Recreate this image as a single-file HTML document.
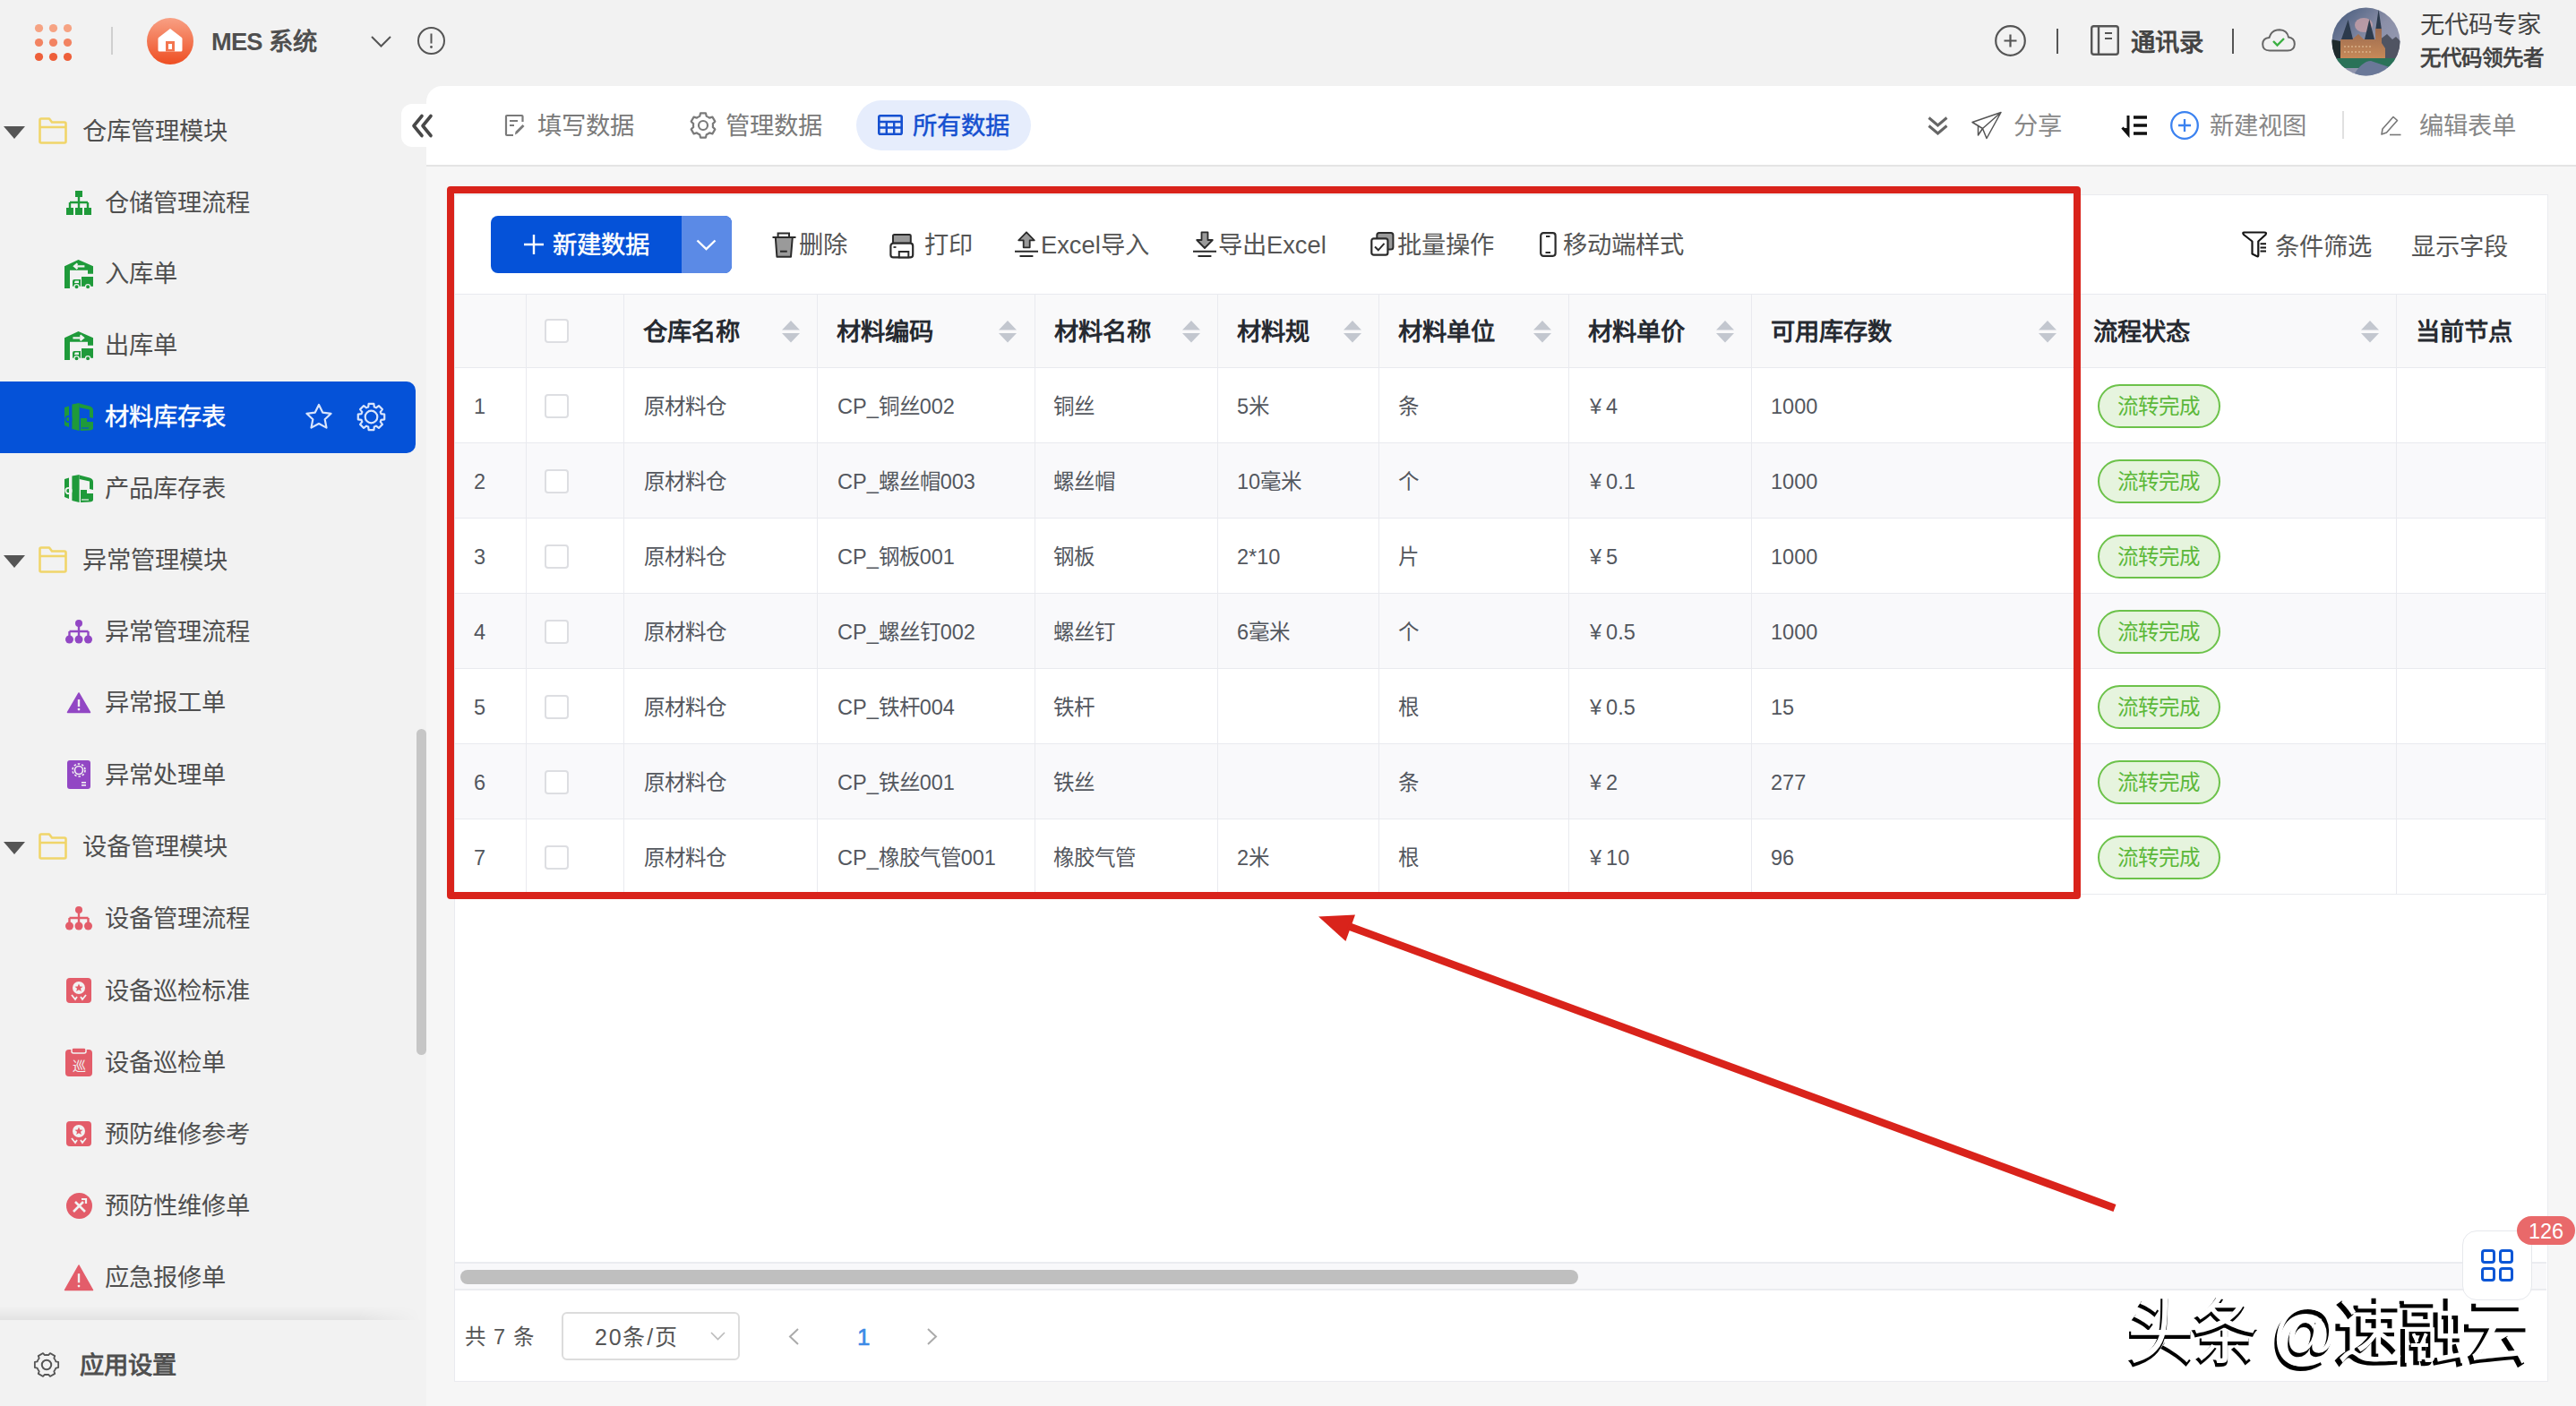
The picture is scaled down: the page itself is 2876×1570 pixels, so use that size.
<!DOCTYPE html>
<html lang="zh-CN"><head><meta charset="utf-8"><title>MES</title><style>
*{margin:0;padding:0;box-sizing:border-box}
html,body{width:2876px;height:1570px;overflow:hidden;background:#f2f2f2;font-family:"Liberation Sans",sans-serif}
.t{position:absolute;white-space:nowrap}
.s{position:absolute;overflow:visible}
.r{position:absolute}
</style></head>
<body>
<svg class="s" style="left:39px;top:27px;" width="42" height="42" viewBox="0 0 42 42"><circle cx="4.5" cy="4.5" r="4.6" fill="#f6a383"/><circle cx="20.5" cy="4.5" r="4.6" fill="#f6a383"/><circle cx="36.5" cy="4.5" r="4.6" fill="#f6a383"/><circle cx="4.5" cy="20.5" r="4.6" fill="#f28362"/><circle cx="20.5" cy="20.5" r="4.6" fill="#f28362"/><circle cx="36.5" cy="20.5" r="4.6" fill="#f28362"/><circle cx="4.5" cy="36.5" r="4.6" fill="#ee5f3a"/><circle cx="20.5" cy="36.5" r="4.6" fill="#ee5f3a"/><circle cx="36.5" cy="36.5" r="4.6" fill="#ee5f3a"/></svg>
<div class="r" style="left:124px;top:30px;width:2px;height:31px;background:#cfcfcf"></div>
<svg class="s" style="left:164px;top:20px;" width="52" height="52" viewBox="0 0 52 52"><defs><linearGradient id="og" x1="0" y1="0" x2="0" y2="1"><stop offset="0" stop-color="#f8a084"/><stop offset="1" stop-color="#ee4e22"/></linearGradient></defs>
<circle cx="26" cy="26" r="26" fill="url(#og)"/>
<path d="M26 12 L39 22 Q39.5 22.5 39.5 23.5 L39.5 36 Q39.5 37.5 38 37.5 L14 37.5 Q12.5 37.5 12.5 36 L12.5 23.5 Q12.5 22.5 13 22 Z" fill="#fff"/><rect x="21" y="26" width="10" height="11.5" fill="#f3764f"/><rect x="24" y="29" width="4" height="6" fill="#fff"/></svg>
<div class="t" style="left:236px;top:28.0px;font-size:27.3px;line-height:38px;color:#4f4f4f;font-weight:bold;letter-spacing:-0.8px">MES<span style="letter-spacing:0"> </span>系统</div>
<svg class="s" style="left:414px;top:40px;" width="23" height="13" viewBox="0 0 23 13"><path d="M1 1 L11.5 11.5 L22 1" fill="none" stroke="#555" stroke-width="2"/></svg>
<svg class="s" style="left:466px;top:30px;" width="31" height="31" viewBox="0 0 31 31"><circle cx="15.5" cy="15.5" r="14.5" fill="none" stroke="#555" stroke-width="2"/><rect x="14.5" y="7.5" width="2" height="11" fill="#555"/><circle cx="15.5" cy="22.5" r="1.4" fill="#555"/></svg>
<svg class="s" style="left:2227px;top:28px;" width="35" height="35" viewBox="0 0 35 35"><circle cx="17.5" cy="17.5" r="16.3" fill="none" stroke="#555" stroke-width="2.2"/><path d="M17.5 10.5V24.5M10.5 17.5H24.5" stroke="#555" stroke-width="2.2"/></svg>
<div class="r" style="left:2296px;top:32px;width:2px;height:28px;background:#555"></div>
<svg class="s" style="left:2334px;top:28px;" width="32" height="34" viewBox="0 0 32 34"><rect x="1.2" y="1.2" width="29.6" height="31.6" rx="2.5" fill="none" stroke="#555" stroke-width="2.4"/><path d="M9 1.5V32.5" stroke="#555" stroke-width="2.4"/><path d="M16 9H24M16 15H24" stroke="#555" stroke-width="2"/></svg>
<div class="t" style="left:2379px;top:29.0px;font-size:27.3px;line-height:38px;color:#444;font-weight:bold;">通讯录</div>
<div class="r" style="left:2492px;top:32px;width:2px;height:28px;background:#555"></div>
<svg class="s" style="left:2525px;top:32px;" width="38" height="26" viewBox="0 0 38 26"><path d="M9 24.5 Q1 24.5 1.2 17 Q1.5 10.5 8.5 10 Q11 1.2 20 1.2 Q28.5 1.5 30 9.5 Q37 10.5 36.8 17.5 Q36.5 24.5 29 24.5 Z" fill="none" stroke="#666" stroke-width="2"/><path d="M13 14 L17.5 18.5 L25 11" fill="none" stroke="#3cb043" stroke-width="2.4"/></svg>
<svg class="s" style="left:2603px;top:8px;" width="77" height="77" viewBox="0 0 77 77"><defs><clipPath id="av"><circle cx="38.5" cy="38.5" r="38"/></clipPath>
<linearGradient id="sky" x1="0" y1="0" x2="1" y2="1"><stop offset="0" stop-color="#3f5578"/><stop offset="0.5" stop-color="#8c90a8"/><stop offset="1" stop-color="#9aa0b8"/></linearGradient>
<linearGradient id="fac" x1="0" y1="0" x2="0" y2="1"><stop offset="0" stop-color="#9a6a50"/><stop offset="1" stop-color="#c88a58"/></linearGradient></defs>
<g clip-path="url(#av)"><rect width="77" height="77" fill="url(#sky)"/>
<ellipse cx="36" cy="20" rx="10" ry="8" fill="#c8a0a8" opacity="0.8"/>
<path d="M53 37 L62 30 L68 36 L72 33 L77 38 L77 57 L53 57 Z" fill="#505462"/>
<path d="M0 36 L10 38 L10 58 L0 58 Z" fill="#1f2b2c"/>
<path d="M10 58 L10 36 L23 36 L30 30 L36 36 L49 36 L49 24 L56 24 L56 40 L60 46 L60 58 Z" fill="url(#fac)"/>
<path d="M11 36 L18.6 14 L24 36 Z M37 36 L42.3 13.5 L48 36 Z M49.4 24 L52.6 2.5 L55.8 24 Z" fill="#2c3a4c"/>
<path d="M14 44 H45 M14 50 H45" stroke="#e8c8a0" stroke-width="1.2" stroke-dasharray="2 2"/>
<path d="M0 57 L77 57 L77 68 L0 68 Z" fill="#2a7258"/>
<path d="M24 77 Q34 60 44 60 Q60 66 77 70 L77 77 Z" fill="#6a7898"/>
<path d="M0 68 Q20 70 30 77 L0 77 Z" fill="#5a6888"/></g></svg>
<div class="t" style="left:2702px;top:9.0px;font-size:27.3px;line-height:38px;color:#444;font-weight:normal;">无代码专家</div>
<div class="t" style="left:2702px;top:49.0px;font-size:23.5px;line-height:32px;color:#444;font-weight:bold;">无代码领先者</div>
<div class="r" style="left:476px;top:96px;width:2400px;height:1474px;background:#f6f6f6;border-top-left-radius:18px"></div>
<div class="r" style="left:476px;top:96px;width:2400px;height:90px;background:#fff;border-top-left-radius:18px;border-bottom:2px solid #e4e4e4"></div>
<div class="r" style="left:448px;top:116px;width:40px;height:48px;background:#fff;border-radius:12px 0 0 12px"></div>
<svg class="s" style="left:460px;top:128px;" width="24" height="25" viewBox="0 0 24 25"><path d="M11 1.5 L2 12.5 L11 23.5 M21 1.5 L12 12.5 L21 23.5" fill="none" stroke="#484848" stroke-width="3.6" stroke-linejoin="round" stroke-linecap="round"/></svg>
<svg class="s" style="left:564px;top:128px;" width="21" height="24" viewBox="0 0 21 24"><path d="M19.5 8 V2 Q19.5 1 18.5 1 L2 1 Q1 1 1 2 L1 22 Q1 23 2 23 L9 23" fill="none" stroke="#7a7a7a" stroke-width="2.2"/><path d="M5 7 H14 M5 12 H10" stroke="#7a7a7a" stroke-width="2"/><path d="M11 22.5 L11.5 19 L19.5 11 L21.5 13 L13.5 21 Z" fill="#7a7a7a"/></svg>
<div class="t" style="left:600px;top:122.0px;font-size:27.3px;line-height:38px;color:#7a7a7a;font-weight:normal;">填写数据</div>
<svg class="s" style="left:770px;top:125px;" width="30" height="30" viewBox="0 0 30 30"><path d="M11.24 4.66 L12.09 1.31 L17.91 1.31 L18.76 4.66 A11 11 0 0 1 22.07 6.57 L25.40 5.63 L28.31 10.67 L25.83 13.09 A11 11 0 0 1 25.83 16.91 L28.31 19.33 L25.40 24.37 L22.07 23.43 A11 11 0 0 1 18.76 25.34 L17.91 28.69 L12.09 28.69 L11.24 25.34 A11 11 0 0 1 7.93 23.43 L4.60 24.37 L1.69 19.33 L4.17 16.91 A11 11 0 0 1 4.17 13.09 L1.69 10.67 L4.60 5.63 L7.93 6.57 A11 11 0 0 1 11.24 4.66 Z" fill="none" stroke="#7a7a7a" stroke-width="2.2" stroke-linejoin="round"/><circle cx="15" cy="15" r="5" fill="none" stroke="#7a7a7a" stroke-width="2.2"/></svg>
<div class="t" style="left:810px;top:122.0px;font-size:27.3px;line-height:38px;color:#7a7a7a;font-weight:normal;">管理数据</div>
<div class="r" style="left:956px;top:112px;width:195px;height:56px;background:#e6edfc;border-radius:28px"></div>
<svg class="s" style="left:980px;top:128px;" width="28" height="23" viewBox="0 0 28 23"><rect x="1.3" y="1.3" width="25.4" height="20.4" rx="1.5" fill="none" stroke="#1550d0" stroke-width="2.6"/><path d="M1.3 8 H26.7 M1.3 14.5 H26.7 M9.8 8 V21.7 M18.2 8 V21.7" stroke="#1550d0" stroke-width="2.4"/></svg>
<div class="t" style="left:1019px;top:122.0px;font-size:27.3px;line-height:38px;color:#1550d0;font-weight:normal;-webkit-text-stroke:0.5px #1550d0">所有数据</div>
<svg class="s" style="left:2152px;top:130px;" width="23" height="21" viewBox="0 0 23 21"><path d="M1.5 1.5 L11.5 10 L21.5 1.5 M1.5 10.5 L11.5 19 L21.5 10.5" fill="none" stroke="#666" stroke-width="3"/></svg>
<svg class="s" style="left:2201px;top:125px;" width="34" height="30" viewBox="0 0 34 30"><path d="M1 11.5 L33 0.5 L17 29.5 L12.5 18.5 Z M12.5 18.5 L33 0.5 M7.5 14.5 L7.5 26 L12.5 18.5" fill="none" stroke="#555" stroke-width="1.5" stroke-linejoin="round"/></svg>
<div class="t" style="left:2248px;top:122.0px;font-size:27.3px;line-height:38px;color:#888;font-weight:normal;">分享</div>
<svg class="s" style="left:2368px;top:129px;" width="30" height="22" viewBox="0 0 30 22"><path d="M8 0 V19 M1.5 13.5 L8 21 L8 13" stroke="#111" stroke-width="3" fill="none"/><path d="M1 14 L8 22 L8 14 Z" fill="#111"/><path d="M14 2 H29 M14 11 H29 M14 20 H29" stroke="#111" stroke-width="3.4"/></svg>
<svg class="s" style="left:2423px;top:124px;" width="32" height="32" viewBox="0 0 32 32"><circle cx="16" cy="16" r="14.8" fill="none" stroke="#3b82f0" stroke-width="2.3"/><path d="M16 9 V23 M9 16 H23" stroke="#3b82f0" stroke-width="2.3"/></svg>
<div class="t" style="left:2467px;top:122.0px;font-size:27.3px;line-height:38px;color:#888;font-weight:normal;">新建视图</div>
<div class="r" style="left:2615px;top:124px;width:2px;height:31px;background:#e0e0e0"></div>
<svg class="s" style="left:2657px;top:128px;" width="24" height="24" viewBox="0 0 24 24"><path d="M2 22 L3 16 L15 2.5 L19.5 6.5 L7.5 20 Z" fill="none" stroke="#777" stroke-width="1.6" stroke-linejoin="round"/><path d="M11 22.5 H23.5" stroke="#777" stroke-width="1.6"/></svg>
<div class="t" style="left:2701px;top:122.0px;font-size:27.3px;line-height:38px;color:#888;font-weight:normal;">编辑表单</div>
<svg class="s" style="left:4px;top:141px;" width="24" height="14" viewBox="0 0 24 14"><path d="M0 0 L24 0 L12 14 Z" fill="#555"/></svg>
<svg class="s" style="left:43px;top:131px;" width="32" height="30" viewBox="0 0 32 30"><path d="M1.5 3 Q1.5 1.5 3 1.5 L12 1.5 L15 5.5 L29 5.5 Q30.5 5.5 30.5 7 L30.5 27 Q30.5 28.5 29 28.5 L3 28.5 Q1.5 28.5 1.5 27 Z M1.5 11 L30.5 11" fill="none" stroke="#f0d56a" stroke-width="2.6" stroke-linejoin="round"/></svg>
<div class="t" style="left:92px;top:128.0px;font-size:27.3px;line-height:38px;color:#4f4f4f;font-weight:normal;">仓库管理模块</div>
<svg class="s" style="left:74px;top:212.5px;" width="28" height="27" viewBox="0 0 28 27"><rect x="10" y="0" width="8" height="7" fill="#1f9a3a"/><path d="M14 7V13M4 13H24M4 13V19M14 13V19M24 13V19" stroke="#1f9a3a" stroke-width="2.4" fill="none"/><rect x="0" y="19" width="8" height="8" fill="#1f9a3a"/><rect x="10" y="19" width="8" height="8" fill="#1f9a3a"/><rect x="20" y="19" width="8" height="8" fill="#1f9a3a"/></svg>
<div class="t" style="left:117px;top:208.0px;font-size:27.3px;line-height:38px;color:#4f4f4f;font-weight:normal;">仓储管理流程</div>
<svg class="s" style="left:72px;top:289.5px;" width="32" height="33" viewBox="0 0 32 33"><path d="M0 7.3 L15.5 0 L32 7.3 V15.8 H26 V11.8 H6 V32 H0 Z" fill="#1f9a3a"/><path d="M22.4 7.3 H11.5 M14.5 4.4 L11 7.3 L14.5 10.2" stroke="#f2f2f2" stroke-width="2.2" fill="none"/><rect x="19" y="19" width="13" height="10.8" fill="#1f9a3a"/><path d="M9 29.8 V24 Q9 22 11 22 L18 22 L18 29.8 Z" fill="#1f9a3a"/><path d="M11 26 L11.8 23.6 H16 V26 Z" fill="#f2f2f2"/><circle cx="13.5" cy="30.2" r="2.6" fill="#1f9a3a" stroke="#f2f2f2" stroke-width="1.2"/><circle cx="26.1" cy="30.2" r="2.6" fill="#1f9a3a" stroke="#f2f2f2" stroke-width="1.2"/></svg>
<div class="t" style="left:117px;top:287.0px;font-size:27.3px;line-height:38px;color:#4f4f4f;font-weight:normal;">入库单</div>
<svg class="s" style="left:72px;top:369.5px;" width="32" height="33" viewBox="0 0 32 33"><path d="M0 7.3 L15.5 0 L32 7.3 V15.8 H26 V11.8 H6 V32 H0 Z" fill="#1f9a3a"/><path d="M9.4 7.3 H20.5 M17.5 4.4 L21 7.3 L17.5 10.2" stroke="#f2f2f2" stroke-width="2.2" fill="none"/><rect x="19" y="19" width="13" height="10.8" fill="#1f9a3a"/><path d="M9 29.8 V24 Q9 22 11 22 L18 22 L18 29.8 Z" fill="#1f9a3a"/><path d="M11 26 L11.8 23.6 H16 V26 Z" fill="#f2f2f2"/><circle cx="13.5" cy="30.2" r="2.6" fill="#1f9a3a" stroke="#f2f2f2" stroke-width="1.2"/><circle cx="26.1" cy="30.2" r="2.6" fill="#1f9a3a" stroke="#f2f2f2" stroke-width="1.2"/></svg>
<div class="t" style="left:117px;top:367.0px;font-size:27.3px;line-height:38px;color:#4f4f4f;font-weight:normal;">出库单</div>
<div class="r" style="left:-20px;top:426px;width:484px;height:80px;background:#0552d8;border-radius:10px"></div>
<svg class="s" style="left:72px;top:449.5px;" width="32" height="32" viewBox="0 0 32 32"><path d="M0 5 L5 3.5 V27 L0 25 Z" fill="#1f9a3a"/><path d="M8.4 1.5 L16.6 0 V31 L8.4 29 Z" fill="#1f9a3a"/><path d="M16.6 0.5 L28 3.5 Q32 4.5 32 8 V17 L28 16 V7.5 L16.6 5 Z" fill="#1f9a3a"/><path d="M18 17 H25 V21 H32 V28 Q32 30 28 30.5 L18 31 Z" fill="#1f9a3a"/><circle cx="4.5" cy="18" r="3.2" fill="none" stroke="#0552d8" stroke-width="1.8"/><path d="M19 28 H27" stroke="#0552d8" stroke-width="1.2"/></svg>
<div class="t" style="left:117px;top:447.0px;font-size:27.3px;line-height:38px;color:#fff;font-weight:normal;-webkit-text-stroke:0.5px #fff">材料库存表</div>
<svg class="s" style="left:340px;top:450px;" width="32" height="31" viewBox="0 0 32 31"><path d="M16 2 L20.2 10.6 L29.6 11.8 L22.7 18.3 L24.5 27.6 L16 23 L7.5 27.6 L9.3 18.3 L2.4 11.8 L11.8 10.6 Z" fill="none" stroke="#d8e4fc" stroke-width="2.2" stroke-linejoin="round"/></svg>
<svg class="s" style="left:398px;top:449px;" width="33" height="33" viewBox="0 0 33 33"><path d="M13.14 5.50 L13.64 1.78 L19.36 1.78 L19.86 5.50 A11.5 11.5 0 0 1 21.90 6.35 L24.89 4.06 L28.94 8.11 L26.65 11.10 A11.5 11.5 0 0 1 27.50 13.14 L31.22 13.64 L31.22 19.36 L27.50 19.86 A11.5 11.5 0 0 1 26.65 21.90 L28.94 24.89 L24.89 28.94 L21.90 26.65 A11.5 11.5 0 0 1 19.86 27.50 L19.36 31.22 L13.64 31.22 L13.14 27.50 A11.5 11.5 0 0 1 11.10 26.65 L8.11 28.94 L4.06 24.89 L6.35 21.90 A11.5 11.5 0 0 1 5.50 19.86 L1.78 19.36 L1.78 13.64 L5.50 13.14 A11.5 11.5 0 0 1 6.35 11.10 L4.06 8.11 L8.11 4.06 L11.10 6.35 A11.5 11.5 0 0 1 13.14 5.50 Z" fill="none" stroke="#d8e4fc" stroke-width="2.2" stroke-linejoin="round"/><circle cx="16.5" cy="16.5" r="6.8" fill="none" stroke="#d8e4fc" stroke-width="2.2"/></svg>
<svg class="s" style="left:72px;top:529.5px;" width="32" height="32" viewBox="0 0 32 32"><path d="M0 5 L5 3.5 V27 L0 25 Z" fill="#1f9a3a"/><path d="M8.4 1.5 L16.6 0 V31 L8.4 29 Z" fill="#1f9a3a"/><path d="M16.6 0.5 L28 3.5 Q32 4.5 32 8 V17 L28 16 V7.5 L16.6 5 Z" fill="#1f9a3a"/><path d="M18 17 H25 V21 H32 V28 Q32 30 28 30.5 L18 31 Z" fill="#1f9a3a"/><circle cx="4.5" cy="18" r="3.2" fill="none" stroke="#f2f2f2" stroke-width="1.8"/><path d="M19 28 H27" stroke="#f2f2f2" stroke-width="1.2"/></svg>
<div class="t" style="left:117px;top:527.0px;font-size:27.3px;line-height:38px;color:#4f4f4f;font-weight:normal;">产品库存表</div>
<svg class="s" style="left:4px;top:620px;" width="24" height="14" viewBox="0 0 24 14"><path d="M0 0 L24 0 L12 14 Z" fill="#555"/></svg>
<svg class="s" style="left:43px;top:610px;" width="32" height="30" viewBox="0 0 32 30"><path d="M1.5 3 Q1.5 1.5 3 1.5 L12 1.5 L15 5.5 L29 5.5 Q30.5 5.5 30.5 7 L30.5 27 Q30.5 28.5 29 28.5 L3 28.5 Q1.5 28.5 1.5 27 Z M1.5 11 L30.5 11" fill="none" stroke="#f0d56a" stroke-width="2.6" stroke-linejoin="round"/></svg>
<div class="t" style="left:92px;top:607.0px;font-size:27.3px;line-height:38px;color:#4f4f4f;font-weight:normal;">异常管理模块</div>
<svg class="s" style="left:73px;top:692px;" width="30" height="27" viewBox="0 0 30 27"><circle cx="15" cy="4" r="4" fill="#9247c4"/><path d="M15 7V13M4.5 13H25.5M4.5 13V21M15 13V21M25.5 13V21" stroke="#9247c4" stroke-width="2.4" fill="none"/><circle cx="4.5" cy="22" r="4.5" fill="#9247c4"/><circle cx="15" cy="22" r="4.5" fill="#9247c4"/><circle cx="25.5" cy="22" r="4.5" fill="#9247c4"/></svg>
<div class="t" style="left:117px;top:687.0px;font-size:27.3px;line-height:38px;color:#4f4f4f;font-weight:normal;">异常管理流程</div>
<svg class="s" style="left:75px;top:772.5px;" width="26" height="23" viewBox="0 0 26 23"><path d="M13.0 1 L25.5 22.5 L0.5 22.5 Z" fill="#9247c4" stroke="#9247c4" stroke-linejoin="round" stroke-width="1.5"/><rect x="11.8" y="8.049999999999999" width="2.4" height="8.049999999999999" fill="#f2f2f2"/><circle cx="13.0" cy="19.09" r="1.4" fill="#f2f2f2"/></svg>
<div class="t" style="left:117px;top:766.0px;font-size:27.3px;line-height:38px;color:#4f4f4f;font-weight:normal;">异常报工单</div>
<svg class="s" style="left:75px;top:849px;" width="26" height="32" viewBox="0 0 26 32"><rect x="0" y="0" width="26" height="32" rx="3" fill="#9247c4"/><circle cx="13" cy="11" r="4.5" fill="none" stroke="#f2f2f2" stroke-width="1.6"/><circle cx="13" cy="11" r="7" fill="none" stroke="#f2f2f2" stroke-width="1.6" stroke-dasharray="2.5 2"/><rect x="16" y="24" width="5" height="1.6" fill="#f2f2f2"/><rect x="16" y="27" width="5" height="1.6" fill="#f2f2f2"/></svg>
<div class="t" style="left:117px;top:847.0px;font-size:27.3px;line-height:38px;color:#4f4f4f;font-weight:normal;">异常处理单</div>
<svg class="s" style="left:4px;top:940px;" width="24" height="14" viewBox="0 0 24 14"><path d="M0 0 L24 0 L12 14 Z" fill="#555"/></svg>
<svg class="s" style="left:43px;top:930px;" width="32" height="30" viewBox="0 0 32 30"><path d="M1.5 3 Q1.5 1.5 3 1.5 L12 1.5 L15 5.5 L29 5.5 Q30.5 5.5 30.5 7 L30.5 27 Q30.5 28.5 29 28.5 L3 28.5 Q1.5 28.5 1.5 27 Z M1.5 11 L30.5 11" fill="none" stroke="#f0d56a" stroke-width="2.6" stroke-linejoin="round"/></svg>
<div class="t" style="left:92px;top:927.0px;font-size:27.3px;line-height:38px;color:#4f4f4f;font-weight:normal;">设备管理模块</div>
<svg class="s" style="left:73px;top:1012px;" width="30" height="27" viewBox="0 0 30 27"><circle cx="15" cy="4" r="4" fill="#e35d6a"/><path d="M15 7V13M4.5 13H25.5M4.5 13V21M15 13V21M25.5 13V21" stroke="#e35d6a" stroke-width="2.4" fill="none"/><circle cx="4.5" cy="22" r="4.5" fill="#e35d6a"/><circle cx="15" cy="22" r="4.5" fill="#e35d6a"/><circle cx="25.5" cy="22" r="4.5" fill="#e35d6a"/></svg>
<div class="t" style="left:117px;top:1007.0px;font-size:27.3px;line-height:38px;color:#4f4f4f;font-weight:normal;">设备管理流程</div>
<svg class="s" style="left:74px;top:1092px;" width="28" height="28" viewBox="0 0 28 28"><rect x="0" y="0" width="28" height="28" rx="4" fill="#e35d6a"/><circle cx="14" cy="11" r="7" fill="#f2f2f2"/><path d="M14 6.5 L15.3 9.5 L18.5 9.7 L16 11.8 L16.8 15 L14 13.3 L11.2 15 L12 11.8 L9.5 9.7 L12.7 9.5 Z" fill="#e35d6a"/><path d="M6 19 L10 24 L12 21 M22 19 L18 24 L16 21" stroke="#f2f2f2" stroke-width="1.8" fill="none"/></svg>
<div class="t" style="left:117px;top:1088.0px;font-size:27.3px;line-height:38px;color:#4f4f4f;font-weight:normal;">设备巡检标准</div>
<svg class="s" style="left:73px;top:1170px;" width="30" height="32" viewBox="0 0 30 32"><rect x="0" y="2" width="30" height="30" rx="4" fill="#e35d6a"/><rect x="7" y="0" width="16" height="6" rx="2" fill="#e35d6a" stroke="#f2f2f2" stroke-width="1.5"/><text x="15" y="26" font-size="15" fill="#f2f2f2" text-anchor="middle">巡</text></svg>
<div class="t" style="left:117px;top:1168.0px;font-size:27.3px;line-height:38px;color:#4f4f4f;font-weight:normal;">设备巡检单</div>
<svg class="s" style="left:74px;top:1252px;" width="28" height="28" viewBox="0 0 28 28"><rect x="0" y="0" width="28" height="28" rx="4" fill="#e35d6a"/><circle cx="14" cy="11" r="7" fill="#f2f2f2"/><path d="M14 6.5 L15.3 9.5 L18.5 9.7 L16 11.8 L16.8 15 L14 13.3 L11.2 15 L12 11.8 L9.5 9.7 L12.7 9.5 Z" fill="#e35d6a"/><path d="M6 19 L10 24 L12 21 M22 19 L18 24 L16 21" stroke="#f2f2f2" stroke-width="1.8" fill="none"/></svg>
<div class="t" style="left:117px;top:1248.0px;font-size:27.3px;line-height:38px;color:#4f4f4f;font-weight:normal;">预防维修参考</div>
<svg class="s" style="left:74px;top:1331.5px;" width="29" height="29" viewBox="0 0 29 29"><circle cx="14.5" cy="14.5" r="14.5" fill="#e35d6a"/><path d="M8 21 L19 10 M10 10 L21 21" stroke="#f2f2f2" stroke-width="2.6"/><path d="M17 7 L22 7 L22 12" stroke="#f2f2f2" stroke-width="2.2" fill="none"/></svg>
<div class="t" style="left:117px;top:1328.0px;font-size:27.3px;line-height:38px;color:#4f4f4f;font-weight:normal;">预防性维修单</div>
<svg class="s" style="left:72px;top:1411.5px;" width="32" height="29" viewBox="0 0 32 29"><path d="M16.0 1 L31.5 28.5 L0.5 28.5 Z" fill="#e35d6a" stroke="#e35d6a" stroke-linejoin="round" stroke-width="1.5"/><rect x="14.8" y="10.149999999999999" width="2.4" height="10.149999999999999" fill="#f2f2f2"/><circle cx="16.0" cy="24.07" r="1.4" fill="#f2f2f2"/></svg>
<div class="t" style="left:117px;top:1408.0px;font-size:27.3px;line-height:38px;color:#4f4f4f;font-weight:normal;">应急报修单</div>
<div class="r" style="left:465px;top:814px;width:11px;height:364px;background:#c6c6c6;border-radius:6px"></div>
<div class="r" style="left:0px;top:1458px;width:470px;height:16px;background:linear-gradient(rgba(0,0,0,0),rgba(0,0,0,0.06));-webkit-mask-image:linear-gradient(90deg,#000 85%,transparent)"></div>
<svg class="s" style="left:38px;top:1510px;" width="28" height="28" viewBox="0 0 28 28"><path d="M24.40 10.42 L27.15 10.96 L27.15 17.04 L24.40 17.58 A11 11 0 0 1 22.30 21.22 L23.21 23.87 L17.95 26.91 L16.10 24.80 A11 11 0 0 1 11.90 24.80 L10.05 26.91 L4.79 23.87 L5.70 21.22 A11 11 0 0 1 3.60 17.58 L0.85 17.04 L0.85 10.96 L3.60 10.42 A11 11 0 0 1 5.70 6.78 L4.79 4.13 L10.05 1.09 L11.90 3.20 A11 11 0 0 1 16.10 3.20 L17.95 1.09 L23.21 4.13 L22.30 6.78 A11 11 0 0 1 24.40 10.42 Z" fill="none" stroke="#555" stroke-width="1.8" stroke-linejoin="round"/><circle cx="14" cy="14" r="5.2" fill="none" stroke="#555" stroke-width="2"/></svg>
<div class="t" style="left:89px;top:1506.0px;font-size:27.3px;line-height:38px;color:#505050;font-weight:bold;">应用设置</div>
<div class="r" style="left:507px;top:217px;width:2338px;height:1326px;background:#fff;border:1.5px solid #eaebef"></div>
<div class="r" style="left:548px;top:241px;width:269px;height:64px;background:#0552d8;border-radius:8px;overflow:hidden"></div>
<div class="r" style="left:761px;top:241px;width:56px;height:64px;background:#5b8ae6;border-radius:0 8px 8px 0"></div>
<svg class="s" style="left:585px;top:262px;" width="22" height="22" viewBox="0 0 22 22"><path d="M11 0 V22 M0 11 H22" stroke="#fff" stroke-width="2.4"/></svg>
<div class="t" style="left:617px;top:255.0px;font-size:27.3px;line-height:38px;color:#fff;font-weight:normal;-webkit-text-stroke:0.5px #fff">新建数据</div>
<svg class="s" style="left:777px;top:267px;" width="23" height="13" viewBox="0 0 23 13"><path d="M1.5 1.5 L11.5 11 L21.5 1.5" fill="none" stroke="#fff" stroke-width="2.4"/></svg>
<svg class="s" style="left:862px;top:259px;" width="27" height="29" viewBox="0 0 27 29"><path d="M0.5 6 H26.5" stroke="#2b2b2b" stroke-width="2"/><rect x="6.6" y="1.5" width="12.4" height="4.5" fill="#fff" stroke="#2b2b2b" stroke-width="2"/><path d="M3.8 6 L22.8 6 L21 27.7 L5.4 27.7 Z" fill="#9a9a9a" stroke="#2b2b2b" stroke-width="2" stroke-linejoin="round"/><path d="M9 21.7 H16.8" stroke="#2b2b2b" stroke-width="2"/></svg>
<div class="t" style="left:892px;top:255.0px;font-size:27.3px;line-height:38px;color:#555;font-weight:normal;">删除</div>
<svg class="s" style="left:993px;top:261px;" width="27" height="28" viewBox="0 0 27 28"><rect x="4" y="1" width="19.8" height="9.7" rx="1.5" fill="#9a9a9a" stroke="#2b2b2b" stroke-width="2"/><rect x="1.4" y="10.7" width="24.8" height="15.7" rx="3" fill="#fff" stroke="#2b2b2b" stroke-width="2.2"/><rect x="10.8" y="20" width="10.5" height="6.4" fill="#fff" stroke="#2b2b2b" stroke-width="2"/><path d="M4.5 15 H7.5" stroke="#2b2b2b" stroke-width="1.8"/></svg>
<div class="t" style="left:1032px;top:255.0px;font-size:27.3px;line-height:38px;color:#555;font-weight:normal;">打印</div>
<svg class="s" style="left:1132px;top:258px;" width="28" height="30" viewBox="0 0 28 30"><path d="M14 1.3 L22.8 10.3 H17.7 V18.3 H10.7 V10.3 H5.2 Z" fill="#9a9a9a" stroke="#2b2b2b" stroke-width="1.8" stroke-linejoin="round"/><path d="M1 22.8 H27 M6.5 27.9 H21.4" stroke="#2b2b2b" stroke-width="2"/></svg>
<div class="t" style="left:1162px;top:255.0px;font-size:27.3px;line-height:38px;color:#555;font-weight:normal;">Excel导入</div>
<svg class="s" style="left:1331px;top:258px;" width="28" height="30" viewBox="0 0 28 30"><path d="M14 19 L22.8 10 H17.5 V1.3 H10.5 V10 H5.2 Z" fill="#9a9a9a" stroke="#2b2b2b" stroke-width="1.8" stroke-linejoin="round"/><path d="M1 22.8 H27 M6.5 27.9 H21.4" stroke="#2b2b2b" stroke-width="2"/></svg>
<div class="t" style="left:1360px;top:255.0px;font-size:27.3px;line-height:38px;color:#555;font-weight:normal;">导出Excel</div>
<svg class="s" style="left:1530px;top:259px;" width="27" height="28" viewBox="0 0 27 28"><rect x="7.3" y="1" width="18.1" height="18.4" rx="2.5" fill="#9a9a9a" stroke="#2b2b2b" stroke-width="2"/><rect x="1.3" y="7.3" width="18.1" height="18.4" rx="2.5" fill="#fff" stroke="#2b2b2b" stroke-width="2.2"/><path d="M5 16.5 L8.8 20.3 L15.5 12.8" fill="none" stroke="#2b2b2b" stroke-width="2"/></svg>
<div class="t" style="left:1560px;top:255.0px;font-size:27.3px;line-height:38px;color:#555;font-weight:normal;">批量操作</div>
<svg class="s" style="left:1719px;top:259px;" width="19" height="28" viewBox="0 0 19 28"><rect x="1.2" y="1.2" width="16.4" height="25.6" rx="3" fill="none" stroke="#2b2b2b" stroke-width="2.2"/><path d="M7 5 H11.5 M6.5 23 H12" stroke="#2b2b2b" stroke-width="2"/></svg>
<div class="t" style="left:1745px;top:255.0px;font-size:27.3px;line-height:38px;color:#555;font-weight:normal;">移动端样式</div>
<svg class="s" style="left:2502px;top:258px;" width="30" height="30" viewBox="0 0 30 30"><path d="M3 1.5 H26 Q29 1.5 27.5 4 L19.3 11.5 V27 Q19.3 29 17.5 28 L12.5 25.5 V11.5 L3 4 Q1.5 1.5 3 1.5 Z" fill="none" stroke="#151515" stroke-width="2.2" stroke-linejoin="round"/><path d="M21.5 14.2 H28 M21.5 18.4 H28 M21.5 22.4 H28" stroke="#151515" stroke-width="2"/></svg>
<div class="t" style="left:2540px;top:257.0px;font-size:27.3px;line-height:38px;color:#555;font-weight:normal;">条件筛选</div>
<div class="t" style="left:2692px;top:257.0px;font-size:27.3px;line-height:38px;color:#555;font-weight:normal;">显示字段</div>
<div class="r" style="left:508px;top:328px;width:2335px;height:83px;background:#f9f9fa;border-top:1px solid #e9eaef;border-bottom:1px solid #e9eaef"></div>
<div class="r" style="left:508px;top:411px;width:2335px;height:84px;background:#fff;border-bottom:1px solid #e9eaef"></div>
<div class="r" style="left:508px;top:495px;width:2335px;height:84px;background:#f9f9fb;border-bottom:1px solid #e9eaef"></div>
<div class="r" style="left:508px;top:579px;width:2335px;height:84px;background:#fff;border-bottom:1px solid #e9eaef"></div>
<div class="r" style="left:508px;top:663px;width:2335px;height:84px;background:#f9f9fb;border-bottom:1px solid #e9eaef"></div>
<div class="r" style="left:508px;top:747px;width:2335px;height:84px;background:#fff;border-bottom:1px solid #e9eaef"></div>
<div class="r" style="left:508px;top:831px;width:2335px;height:84px;background:#f9f9fb;border-bottom:1px solid #e9eaef"></div>
<div class="r" style="left:508px;top:915px;width:2335px;height:84px;background:#fff;border-bottom:1px solid #e9eaef"></div>
<div class="r" style="left:587px;top:328px;width:1px;height:671px;background:#e9eaef"></div>
<div class="r" style="left:696px;top:328px;width:1px;height:671px;background:#e9eaef"></div>
<div class="r" style="left:912px;top:328px;width:1px;height:671px;background:#e9eaef"></div>
<div class="r" style="left:1155px;top:328px;width:1px;height:671px;background:#e9eaef"></div>
<div class="r" style="left:1359px;top:328px;width:1px;height:671px;background:#e9eaef"></div>
<div class="r" style="left:1539px;top:328px;width:1px;height:671px;background:#e9eaef"></div>
<div class="r" style="left:1751px;top:328px;width:1px;height:671px;background:#e9eaef"></div>
<div class="r" style="left:1955px;top:328px;width:1px;height:671px;background:#e9eaef"></div>
<div class="r" style="left:2315px;top:328px;width:1px;height:671px;background:#e9eaef"></div>
<div class="r" style="left:2675px;top:328px;width:1px;height:671px;background:#e9eaef"></div>
<div class="r" style="left:2842px;top:328px;width:1px;height:671px;background:#e9eaef"></div>
<div class="t" style="left:718px;top:352.0px;font-size:27.3px;line-height:38px;color:#262a31;font-weight:bold;">仓库名称</div>
<svg class="s" style="left:873px;top:358px;" width="20" height="25" viewBox="0 0 20 25"><path d="M10 0 L20 10.5 L0 10.5 Z M0 14 L20 14 L10 24.5 Z" fill="#c3c7cf"/></svg>
<div class="t" style="left:934px;top:352.0px;font-size:27.3px;line-height:38px;color:#262a31;font-weight:bold;">材料编码</div>
<svg class="s" style="left:1115px;top:358px;" width="20" height="25" viewBox="0 0 20 25"><path d="M10 0 L20 10.5 L0 10.5 Z M0 14 L20 14 L10 24.5 Z" fill="#c3c7cf"/></svg>
<div class="t" style="left:1177px;top:352.0px;font-size:27.3px;line-height:38px;color:#262a31;font-weight:bold;">材料名称</div>
<svg class="s" style="left:1320px;top:358px;" width="20" height="25" viewBox="0 0 20 25"><path d="M10 0 L20 10.5 L0 10.5 Z M0 14 L20 14 L10 24.5 Z" fill="#c3c7cf"/></svg>
<div class="t" style="left:1381px;top:352.0px;font-size:27.3px;line-height:38px;color:#262a31;font-weight:bold;">材料规</div>
<svg class="s" style="left:1500px;top:358px;" width="20" height="25" viewBox="0 0 20 25"><path d="M10 0 L20 10.5 L0 10.5 Z M0 14 L20 14 L10 24.5 Z" fill="#c3c7cf"/></svg>
<div class="t" style="left:1561px;top:352.0px;font-size:27.3px;line-height:38px;color:#262a31;font-weight:bold;">材料单位</div>
<svg class="s" style="left:1712px;top:358px;" width="20" height="25" viewBox="0 0 20 25"><path d="M10 0 L20 10.5 L0 10.5 Z M0 14 L20 14 L10 24.5 Z" fill="#c3c7cf"/></svg>
<div class="t" style="left:1773px;top:352.0px;font-size:27.3px;line-height:38px;color:#262a31;font-weight:bold;">材料单价</div>
<svg class="s" style="left:1916px;top:358px;" width="20" height="25" viewBox="0 0 20 25"><path d="M10 0 L20 10.5 L0 10.5 Z M0 14 L20 14 L10 24.5 Z" fill="#c3c7cf"/></svg>
<div class="t" style="left:1977px;top:352.0px;font-size:27.3px;line-height:38px;color:#262a31;font-weight:bold;">可用库存数</div>
<svg class="s" style="left:2276px;top:358px;" width="20" height="25" viewBox="0 0 20 25"><path d="M10 0 L20 10.5 L0 10.5 Z M0 14 L20 14 L10 24.5 Z" fill="#c3c7cf"/></svg>
<div class="t" style="left:2337px;top:352.0px;font-size:27.3px;line-height:38px;color:#262a31;font-weight:bold;">流程状态</div>
<svg class="s" style="left:2636px;top:358px;" width="20" height="25" viewBox="0 0 20 25"><path d="M10 0 L20 10.5 L0 10.5 Z M0 14 L20 14 L10 24.5 Z" fill="#c3c7cf"/></svg>
<div class="t" style="left:2697px;top:352.0px;font-size:27.3px;line-height:38px;color:#262a31;font-weight:bold;">当前节点</div>
<div class="r" style="left:608px;top:356px;width:27px;height:27px;background:#fff;border:2px solid #dddee2;border-radius:4px"></div>
<div class="t" style="left:529px;top:438.0px;font-size:23.5px;line-height:32px;color:#53575e;font-weight:normal;">1</div>
<div class="r" style="left:608px;top:439.5px;width:27px;height:27px;background:#fff;border:2px solid #dddee2;border-radius:4px"></div>
<div class="t" style="left:719px;top:438.0px;font-size:23.5px;line-height:32px;color:#53575e;font-weight:normal;">原材料仓</div>
<div class="t" style="left:935px;top:438.0px;font-size:23.5px;line-height:32px;color:#53575e;font-weight:normal;">CP_铜丝002</div>
<div class="t" style="left:1176px;top:438.0px;font-size:23.5px;line-height:32px;color:#53575e;font-weight:normal;">铜丝</div>
<div class="t" style="left:1381px;top:438.0px;font-size:23.5px;line-height:32px;color:#53575e;font-weight:normal;">5米</div>
<div class="t" style="left:1561px;top:438.0px;font-size:23.5px;line-height:32px;color:#53575e;font-weight:normal;">条</div>
<div class="t" style="left:1775px;top:438.0px;font-size:23.5px;line-height:32px;color:#53575e;font-weight:normal;">¥<span style="margin-left:5px">4</span></div>
<div class="t" style="left:1977px;top:438.0px;font-size:23.5px;line-height:32px;color:#53575e;font-weight:normal;">1000</div>
<div class="r" style="left:2342px;top:428.5px;width:137px;height:49px;background:#e6f4de;border:2px solid #6cc24a;border-radius:25px"></div>
<div class="t" style="left:2364px;top:438.0px;font-size:23.5px;line-height:32px;color:#5cb83a;font-weight:normal;">流转完成</div>
<div class="t" style="left:529px;top:522.0px;font-size:23.5px;line-height:32px;color:#53575e;font-weight:normal;">2</div>
<div class="r" style="left:608px;top:523.5px;width:27px;height:27px;background:#fff;border:2px solid #dddee2;border-radius:4px"></div>
<div class="t" style="left:719px;top:522.0px;font-size:23.5px;line-height:32px;color:#53575e;font-weight:normal;">原材料仓</div>
<div class="t" style="left:935px;top:522.0px;font-size:23.5px;line-height:32px;color:#53575e;font-weight:normal;">CP_螺丝帽003</div>
<div class="t" style="left:1176px;top:522.0px;font-size:23.5px;line-height:32px;color:#53575e;font-weight:normal;">螺丝帽</div>
<div class="t" style="left:1381px;top:522.0px;font-size:23.5px;line-height:32px;color:#53575e;font-weight:normal;">10毫米</div>
<div class="t" style="left:1561px;top:522.0px;font-size:23.5px;line-height:32px;color:#53575e;font-weight:normal;">个</div>
<div class="t" style="left:1775px;top:522.0px;font-size:23.5px;line-height:32px;color:#53575e;font-weight:normal;">¥<span style="margin-left:5px">0.1</span></div>
<div class="t" style="left:1977px;top:522.0px;font-size:23.5px;line-height:32px;color:#53575e;font-weight:normal;">1000</div>
<div class="r" style="left:2342px;top:512.5px;width:137px;height:49px;background:#e6f4de;border:2px solid #6cc24a;border-radius:25px"></div>
<div class="t" style="left:2364px;top:522.0px;font-size:23.5px;line-height:32px;color:#5cb83a;font-weight:normal;">流转完成</div>
<div class="t" style="left:529px;top:606.0px;font-size:23.5px;line-height:32px;color:#53575e;font-weight:normal;">3</div>
<div class="r" style="left:608px;top:607.5px;width:27px;height:27px;background:#fff;border:2px solid #dddee2;border-radius:4px"></div>
<div class="t" style="left:719px;top:606.0px;font-size:23.5px;line-height:32px;color:#53575e;font-weight:normal;">原材料仓</div>
<div class="t" style="left:935px;top:606.0px;font-size:23.5px;line-height:32px;color:#53575e;font-weight:normal;">CP_钢板001</div>
<div class="t" style="left:1176px;top:606.0px;font-size:23.5px;line-height:32px;color:#53575e;font-weight:normal;">钢板</div>
<div class="t" style="left:1381px;top:606.0px;font-size:23.5px;line-height:32px;color:#53575e;font-weight:normal;">2*10</div>
<div class="t" style="left:1561px;top:606.0px;font-size:23.5px;line-height:32px;color:#53575e;font-weight:normal;">片</div>
<div class="t" style="left:1775px;top:606.0px;font-size:23.5px;line-height:32px;color:#53575e;font-weight:normal;">¥<span style="margin-left:5px">5</span></div>
<div class="t" style="left:1977px;top:606.0px;font-size:23.5px;line-height:32px;color:#53575e;font-weight:normal;">1000</div>
<div class="r" style="left:2342px;top:596.5px;width:137px;height:49px;background:#e6f4de;border:2px solid #6cc24a;border-radius:25px"></div>
<div class="t" style="left:2364px;top:606.0px;font-size:23.5px;line-height:32px;color:#5cb83a;font-weight:normal;">流转完成</div>
<div class="t" style="left:529px;top:690.0px;font-size:23.5px;line-height:32px;color:#53575e;font-weight:normal;">4</div>
<div class="r" style="left:608px;top:691.5px;width:27px;height:27px;background:#fff;border:2px solid #dddee2;border-radius:4px"></div>
<div class="t" style="left:719px;top:690.0px;font-size:23.5px;line-height:32px;color:#53575e;font-weight:normal;">原材料仓</div>
<div class="t" style="left:935px;top:690.0px;font-size:23.5px;line-height:32px;color:#53575e;font-weight:normal;">CP_螺丝钉002</div>
<div class="t" style="left:1176px;top:690.0px;font-size:23.5px;line-height:32px;color:#53575e;font-weight:normal;">螺丝钉</div>
<div class="t" style="left:1381px;top:690.0px;font-size:23.5px;line-height:32px;color:#53575e;font-weight:normal;">6毫米</div>
<div class="t" style="left:1561px;top:690.0px;font-size:23.5px;line-height:32px;color:#53575e;font-weight:normal;">个</div>
<div class="t" style="left:1775px;top:690.0px;font-size:23.5px;line-height:32px;color:#53575e;font-weight:normal;">¥<span style="margin-left:5px">0.5</span></div>
<div class="t" style="left:1977px;top:690.0px;font-size:23.5px;line-height:32px;color:#53575e;font-weight:normal;">1000</div>
<div class="r" style="left:2342px;top:680.5px;width:137px;height:49px;background:#e6f4de;border:2px solid #6cc24a;border-radius:25px"></div>
<div class="t" style="left:2364px;top:690.0px;font-size:23.5px;line-height:32px;color:#5cb83a;font-weight:normal;">流转完成</div>
<div class="t" style="left:529px;top:774.0px;font-size:23.5px;line-height:32px;color:#53575e;font-weight:normal;">5</div>
<div class="r" style="left:608px;top:775.5px;width:27px;height:27px;background:#fff;border:2px solid #dddee2;border-radius:4px"></div>
<div class="t" style="left:719px;top:774.0px;font-size:23.5px;line-height:32px;color:#53575e;font-weight:normal;">原材料仓</div>
<div class="t" style="left:935px;top:774.0px;font-size:23.5px;line-height:32px;color:#53575e;font-weight:normal;">CP_铁杆004</div>
<div class="t" style="left:1176px;top:774.0px;font-size:23.5px;line-height:32px;color:#53575e;font-weight:normal;">铁杆</div>
<div class="t" style="left:1381px;top:774.0px;font-size:23.5px;line-height:32px;color:#53575e;font-weight:normal;"></div>
<div class="t" style="left:1561px;top:774.0px;font-size:23.5px;line-height:32px;color:#53575e;font-weight:normal;">根</div>
<div class="t" style="left:1775px;top:774.0px;font-size:23.5px;line-height:32px;color:#53575e;font-weight:normal;">¥<span style="margin-left:5px">0.5</span></div>
<div class="t" style="left:1977px;top:774.0px;font-size:23.5px;line-height:32px;color:#53575e;font-weight:normal;">15</div>
<div class="r" style="left:2342px;top:764.5px;width:137px;height:49px;background:#e6f4de;border:2px solid #6cc24a;border-radius:25px"></div>
<div class="t" style="left:2364px;top:774.0px;font-size:23.5px;line-height:32px;color:#5cb83a;font-weight:normal;">流转完成</div>
<div class="t" style="left:529px;top:858.0px;font-size:23.5px;line-height:32px;color:#53575e;font-weight:normal;">6</div>
<div class="r" style="left:608px;top:859.5px;width:27px;height:27px;background:#fff;border:2px solid #dddee2;border-radius:4px"></div>
<div class="t" style="left:719px;top:858.0px;font-size:23.5px;line-height:32px;color:#53575e;font-weight:normal;">原材料仓</div>
<div class="t" style="left:935px;top:858.0px;font-size:23.5px;line-height:32px;color:#53575e;font-weight:normal;">CP_铁丝001</div>
<div class="t" style="left:1176px;top:858.0px;font-size:23.5px;line-height:32px;color:#53575e;font-weight:normal;">铁丝</div>
<div class="t" style="left:1381px;top:858.0px;font-size:23.5px;line-height:32px;color:#53575e;font-weight:normal;"></div>
<div class="t" style="left:1561px;top:858.0px;font-size:23.5px;line-height:32px;color:#53575e;font-weight:normal;">条</div>
<div class="t" style="left:1775px;top:858.0px;font-size:23.5px;line-height:32px;color:#53575e;font-weight:normal;">¥<span style="margin-left:5px">2</span></div>
<div class="t" style="left:1977px;top:858.0px;font-size:23.5px;line-height:32px;color:#53575e;font-weight:normal;">277</div>
<div class="r" style="left:2342px;top:848.5px;width:137px;height:49px;background:#e6f4de;border:2px solid #6cc24a;border-radius:25px"></div>
<div class="t" style="left:2364px;top:858.0px;font-size:23.5px;line-height:32px;color:#5cb83a;font-weight:normal;">流转完成</div>
<div class="t" style="left:529px;top:942.0px;font-size:23.5px;line-height:32px;color:#53575e;font-weight:normal;">7</div>
<div class="r" style="left:608px;top:943.5px;width:27px;height:27px;background:#fff;border:2px solid #dddee2;border-radius:4px"></div>
<div class="t" style="left:719px;top:942.0px;font-size:23.5px;line-height:32px;color:#53575e;font-weight:normal;">原材料仓</div>
<div class="t" style="left:935px;top:942.0px;font-size:23.5px;line-height:32px;color:#53575e;font-weight:normal;">CP_橡胶气管001</div>
<div class="t" style="left:1176px;top:942.0px;font-size:23.5px;line-height:32px;color:#53575e;font-weight:normal;">橡胶气管</div>
<div class="t" style="left:1381px;top:942.0px;font-size:23.5px;line-height:32px;color:#53575e;font-weight:normal;">2米</div>
<div class="t" style="left:1561px;top:942.0px;font-size:23.5px;line-height:32px;color:#53575e;font-weight:normal;">根</div>
<div class="t" style="left:1775px;top:942.0px;font-size:23.5px;line-height:32px;color:#53575e;font-weight:normal;">¥<span style="margin-left:5px">10</span></div>
<div class="t" style="left:1977px;top:942.0px;font-size:23.5px;line-height:32px;color:#53575e;font-weight:normal;">96</div>
<div class="r" style="left:2342px;top:932.5px;width:137px;height:49px;background:#e6f4de;border:2px solid #6cc24a;border-radius:25px"></div>
<div class="t" style="left:2364px;top:942.0px;font-size:23.5px;line-height:32px;color:#5cb83a;font-weight:normal;">流转完成</div>
<div class="r" style="left:508px;top:1409px;width:2335px;height:32px;background:#f8f8fa;border-top:2px solid #ebecf0;border-bottom:2px solid #ebecf0"></div>
<div class="r" style="left:514px;top:1418px;width:1248px;height:16px;background:#bfbfbf;border-radius:8px"></div>
<div class="t" style="left:519px;top:1477.0px;font-size:23.5px;line-height:32px;color:#555;font-weight:normal;word-spacing:2.5px">共 7 条</div>
<div class="r" style="left:627px;top:1465px;width:199px;height:54px;background:#fff;border:2px solid #dcdcdc;border-radius:6px"></div>
<div class="t" style="left:664px;top:1475.5px;font-size:25px;line-height:35px;color:#555;font-weight:normal;letter-spacing:1.8px">20条/页</div>
<svg class="s" style="left:793px;top:1487px;" width="17" height="10" viewBox="0 0 17 10"><path d="M1 1 L8.5 8.5 L16 1" fill="none" stroke="#bbb" stroke-width="1.6"/></svg>
<svg class="s" style="left:880px;top:1483px;" width="12" height="19" viewBox="0 0 12 19"><path d="M11 1 L2 9.5 L11 18" fill="none" stroke="#aaa" stroke-width="2"/></svg>
<div class="t" style="left:957px;top:1475.0px;font-size:26px;line-height:36px;color:#3d8ae6;font-weight:normal;-webkit-text-stroke:0.6px #3d8ae6">1</div>
<svg class="s" style="left:1035px;top:1483px;" width="12" height="19" viewBox="0 0 12 19"><path d="M1 1 L10 9.5 L1 18" fill="none" stroke="#aaa" stroke-width="2"/></svg>
<div class="r" style="left:499px;top:208px;width:1824px;height:796px;border:8px solid #d9231b;border-radius:4px"></div>
<svg class="s" style="left:1460px;top:1010px;" width="910" height="350" viewBox="0 0 910 350"><path d="M12 13.4 L53 11.6 L42.4 41 Z" fill="#d9231b"/><path d="M45 24 L901 339" stroke="#d9231b" stroke-width="8.5"/></svg>
<div class="r" style="left:2749px;top:1374px;width:78px;height:78px;background:#fff;border:1.5px solid #e6e8ec;border-radius:16px"></div>
<svg class="s" style="left:2770px;top:1395px;" width="36" height="36" viewBox="0 0 36 36"><rect x="1.5" y="1.5" width="13" height="13" rx="2.5" fill="none" stroke="#0b56d6" stroke-width="3"/><rect x="21.5" y="1.5" width="13" height="13" rx="2.5" fill="none" stroke="#0b56d6" stroke-width="3"/><rect x="1.5" y="21.5" width="13" height="13" rx="2.5" fill="none" stroke="#0b56d6" stroke-width="3"/><rect x="21.5" y="21.5" width="13" height="13" rx="2.5" fill="none" stroke="#0b56d6" stroke-width="3"/></svg>
<div class="r" style="left:2810px;top:1358px;width:65px;height:32px;background:#e9696a;border-radius:16px"></div>
<div class="t" style="left:2842.5px;top:1359.0px;font-size:23.5px;line-height:32px;color:#fff;font-weight:normal;transform:translateX(-50%)">126</div>
<div class="t" style="left:2374px;top:1443.0px;font-size:80px;line-height:96px;color:#000;font-weight:bold;letter-spacing:-3px;transform:scaleX(0.93);transform-origin:0 50%;text-shadow:-2px -2px 0 #fff,2px -2px 0 #fff,-2px 2px 0 #fff,2px 2px 0 #fff">头条 @速融云</div>
<div class="t" style="left:2375px;top:1440.0px;font-size:80px;line-height:96px;color:#fff;font-weight:normal;letter-spacing:-3px;transform:scaleX(0.93);transform-origin:0 50%;">头条 @速融云</div>
</body></html>
